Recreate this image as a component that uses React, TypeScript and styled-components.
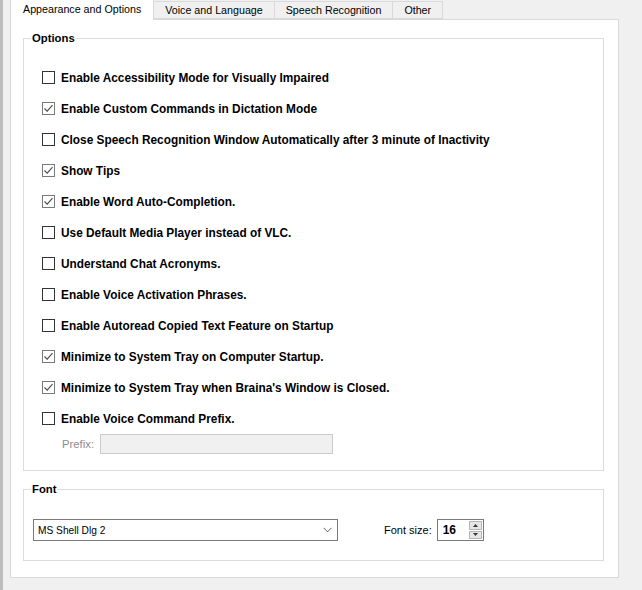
import React from "react";
import styled, { createGlobalStyle } from "styled-components";

const GlobalStyle = createGlobalStyle`
  html, body {
    margin: 0;
    padding: 0;
    background: #f0f0f0;
  }
  * {
    box-sizing: border-box;
  }
`;

const tabs = [
  "Appearance and Options",
  "Voice and Language",
  "Speech Recognition",
  "Other",
];

const options = [
  { text: "Enable Accessibility Mode for Visually Impaired", checked: false },
  { text: "Enable Custom Commands in Dictation Mode", checked: true },
  {
    text: "Close Speech Recognition Window Automatically after 3 minute of Inactivity",
    checked: false,
  },
  { text: "Show Tips", checked: true },
  { text: "Enable Word Auto-Completion.", checked: true },
  { text: "Use Default Media Player instead of VLC.", checked: false },
  { text: "Understand Chat Acronyms.", checked: false },
  { text: "Enable Voice Activation Phrases.", checked: false },
  { text: "Enable Autoread Copied Text Feature on Startup", checked: false },
  { text: "Minimize to System Tray on Computer Startup.", checked: true },
  { text: "Minimize to System Tray when Braina's Window is Closed.", checked: true },
  { text: "Enable Voice Command Prefix.", checked: false },
];

const CheckBox = ({ checked }: { checked: boolean }) => (
  <Box $checked={checked}>
    {checked && (
      <svg width="11" height="11" viewBox="0 0 11 11">
        <path d="M1.5 5.5 L4.2 8.2 L9.5 2.2" fill="none" stroke="#4a4a4a" strokeWidth="1.1" />
      </svg>
    )}
  </Box>
);

const App = () => {
  return (
    <Window>
      <GlobalStyle />
      <TabStrip>
        {tabs.map((t, idx) => (
          <Tab $active={idx === 0} key={idx}>
            {t}
          </Tab>
        ))}
      </TabStrip>
      <Panel>
        <GroupBox $height={433}>
          <Legend>Options</Legend>
          <OptionList>
            {options.map((ele, idx) => (
              <OptionRow key={idx}>
                <CheckBox checked={ele.checked} />
                <OptionLabel>{ele.text}</OptionLabel>
              </OptionRow>
            ))}
            <PrefixRow>
              <PrefixLabel>Prefix:</PrefixLabel>
              <PrefixInput />
            </PrefixRow>
          </OptionList>
        </GroupBox>
        <GroupBox $height={72}>
          <Legend>Font</Legend>
          <FontRow>
            <Select>
              <span>MS Shell Dlg 2</span>
              <svg width="9" height="6" viewBox="0 0 9 6">
                <path d="M0.5 0.8 L4.5 4.8 L8.5 0.8" fill="none" stroke="#606060" strokeWidth="1" />
              </svg>
            </Select>
            <SizeLabel>Font size:</SizeLabel>
            <SpinBox>
              <SpinValue>16</SpinValue>
              <SpinButtons>
                <SpinBtn>
                  <svg width="5" height="3" viewBox="0 0 5 3">
                    <path d="M0 3 L2.5 0 L5 3 Z" fill="#333" />
                  </svg>
                </SpinBtn>
                <SpinBtn>
                  <svg width="5" height="3" viewBox="0 0 5 3">
                    <path d="M0 0 L2.5 3 L5 0 Z" fill="#333" />
                  </svg>
                </SpinBtn>
              </SpinButtons>
            </SpinBox>
          </FontRow>
        </GroupBox>
      </Panel>
    </Window>
  );
};

const Window = styled.div`
  width: 642px;
  height: 590px;
  background: #f0f0f0;
  border-left: 3px solid #bdbdbd;
  padding-left: 7px;
  font-family: "Liberation Sans", Arial, sans-serif;
  overflow: hidden;
`;

const TabStrip = styled.div`
  display: flex;
  align-items: flex-end;
  height: 19px;
  position: relative;
  z-index: 1;
`;

const Tab = styled.div<{ $active: boolean }>`
  height: ${(p) => (p.$active ? "21px" : "18px")};
  margin-bottom: ${(p) => (p.$active ? "-1px" : "0")};
  padding: ${(p) => (p.$active ? "3px 12px 0 12px" : "2px 11px 0 11px")};
  background: ${(p) => (p.$active ? "#ffffff" : "#f0f0f0")};
  border: 1px solid #d9d9d9;
  border-bottom: ${(p) => (p.$active ? "none" : "1px solid #d9d9d9")};
  border-left: ${(p) => (p.$active ? "1px solid #d9d9d9" : "none")};
  font-size: 10.7px;
  color: #000;
  white-space: nowrap;
`;

const Panel = styled.div`
  width: 609px;
  height: 559px;
  background: #ffffff;
  border: 1px solid #d9d9d9;
  padding: 18px 14px 0 12px;
  display: flex;
  flex-direction: column;
  gap: 18px;
`;

const GroupBox = styled.div<{ $height: number }>`
  position: relative;
  height: ${(p) => p.$height}px;
  border: 1px solid #dcdcdc;
`;

const Legend = styled.div`
  position: absolute;
  top: -8px;
  left: 7px;
  padding: 0 1px;
  background: #ffffff;
  font-size: 11.3px;
  font-weight: bold;
  color: #000;
  line-height: 14px;
`;

const OptionList = styled.div`
  display: flex;
  flex-direction: column;
  padding: 23px 0 0 18px;
`;

const OptionRow = styled.div`
  display: flex;
  align-items: center;
  gap: 6px;
  height: 31px;
`;

const Box = styled.div<{ $checked: boolean }>`
  width: 13px;
  height: 13px;
  border: 1px solid ${(p) => (p.$checked ? "#7a7a7a" : "#333333")};
  background: #ffffff;
  display: flex;
  align-items: center;
  justify-content: center;
`;

const OptionLabel = styled.span`
  font-size: 11.85px;
  font-weight: bold;
  color: #000;
  white-space: nowrap;
`;

const PrefixRow = styled.div`
  display: flex;
  align-items: center;
  gap: 6px;
  height: 20px;
  padding-left: 20px;
`;

const PrefixLabel = styled.span`
  font-size: 11.3px;
  color: #8d8d8d;
`;

const PrefixInput = styled.div`
  width: 233px;
  height: 20px;
  background: #f0f0f0;
  border: 1px solid #cccccc;
`;

const FontRow = styled.div`
  display: flex;
  align-items: center;
  padding: 29px 0 0 9px;
`;

const Select = styled.div`
  width: 305px;
  height: 22px;
  border: 1px solid #7a7a7a;
  background: #ffffff;
  display: flex;
  align-items: center;
  justify-content: space-between;
  padding: 0 5px 0 4px;
  font-size: 10.2px;
  color: #000;
`;

const SizeLabel = styled.span`
  margin-left: 46px;
  font-size: 11px;
  color: #000;
`;

const SpinBox = styled.div`
  margin-left: 5px;
  width: 47px;
  height: 22px;
  border: 1px solid #7a7a7a;
  background: #ffffff;
  display: flex;
  align-items: center;
  justify-content: space-between;
  padding: 0 1px 0 5px;
`;

const SpinValue = styled.span`
  font-size: 12px;
  font-weight: bold;
  color: #000;
`;

const SpinButtons = styled.div`
  display: flex;
  flex-direction: column;
  gap: 1px;
  height: 18px;
`;

const SpinBtn = styled.div`
  width: 13px;
  flex: 1;
  background: #e6e6e6;
  border: 1px solid #b5b5b5;
  display: flex;
  align-items: center;
  justify-content: center;
`;

export default App;
